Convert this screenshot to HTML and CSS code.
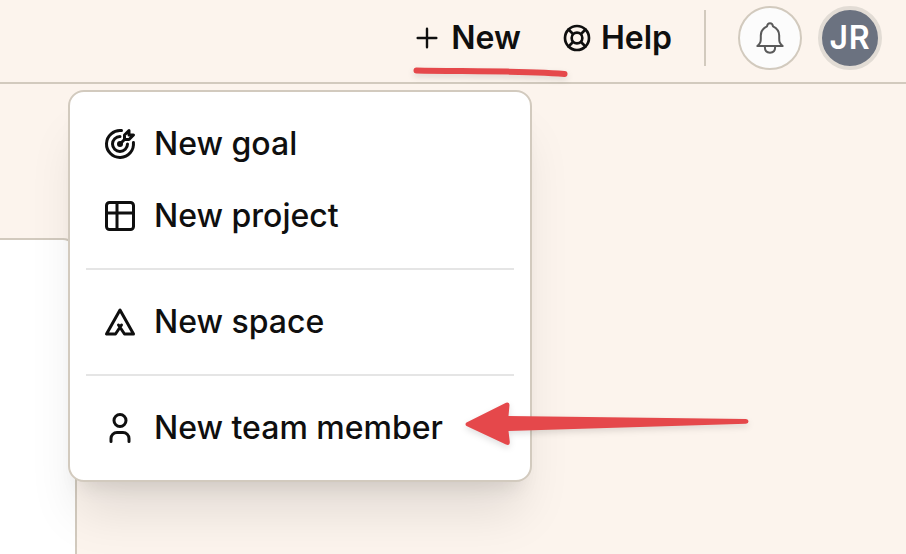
FILE: index.html
```html
<!DOCTYPE html>
<html lang="en">
<head>
<meta charset="utf-8">
<title>New menu</title>
<link rel="stylesheet" href="styles.css">
</head>
<body>
<header class="topbar">
  <div class="action action-new">
    <svg class="icon-sm icon-plus" viewBox="0 0 24 24"><path d="M12 5v14M5 12h14"/></svg>
    <span>New</span>
  </div>
  <div class="action action-help">
    <svg class="icon-sm" viewBox="0 0 24 24"><circle cx="12" cy="12" r="4"/><circle cx="12" cy="12" r="9"/><path d="M15 15l3.35 3.35M9 15l-3.35 3.35M5.65 5.65L9 9M18.35 5.65L15 9"/></svg>
    <span>Help</span>
  </div>
  <div class="divider"></div>
  <div class="bell">
    <svg viewBox="0 0 32 32"><path d="M3.300 24.100h25.400M3.500 24C6.500 21 6.800 20 6.800 16.500V13.500C6.800 9.500 9 6.200 13 4.300C13.300 2.500 14.200 1.300 16 1.300S18.700 2.500 19 4.300C23 6.200 25.200 9.500 25.200 13.500V16.500C25.200 20 25.500 21 28.500 24M10.800 24.500C10.800 28.200 12.800 30.700 16 30.700S21.200 28.200 21.200 24.500"/></svg>
  </div>
  <div class="avatar">JR</div>
</header>
<main class="page">
  <section class="sheet"></section>
</main>
<nav class="menu">
  <div class="item">
    <svg class="icon" viewBox="0 0 24 24"><circle cx="12" cy="12" r="1"/><path d="M12 7a5 5 0 1 0 5 5"/><path d="M13 3.055a9 9 0 1 0 7.941 7.945"/><path d="M15 6v3h3l3-3h-3v-3z"/><path d="M15 9l-3 3"/></svg>
    <span>New goal</span>
  </div>
  <div class="item">
    <svg class="icon" viewBox="0 0 24 24"><rect x="3" y="3" width="18" height="18" rx="2"/><path d="M3 10h18M10 3v18"/></svg>
    <span>New project</span>
  </div>
  <hr class="rule">
  <div class="item">
    <svg class="icon" viewBox="0 0 24 24"><path d="M11 14l4 6h6l-9-16l-9 16h6l4-6"/></svg>
    <span>New space</span>
  </div>
  <hr class="rule">
  <div class="item">
    <svg class="icon" viewBox="0 0 24 24"><circle cx="12" cy="7" r="4"/><path d="M6 21v-2a4 4 0 0 1 4-4h4a4 4 0 0 1 4 4v2"/></svg>
    <span>New team member</span>
  </div>
</nav>
<svg class="marks" viewBox="0 0 906 554">
  <path class="stroke" d="M416.500 70.500C460 71.500 520 70.500 564.500 74"/>
  <path class="arrow" d="M466.500 422.500L506 402.800Q509.500 401.500 509.500 405L508.500 416L746 419Q748.500 419.200 748.500 421.300Q748.500 423.500 746 423.700L508.500 431L509.800 442Q509.800 446 506 444.500L466.500 426Q464.500 424.200 466.500 422.500Z"/>
</svg>
</body>
</html>
```
FILE: styles.css
```css
* { box-sizing: border-box; }
body {
  margin: 0;
  width: 906px;
  height: 554px;
  overflow: hidden;
  position: relative;
  background: #fcf4ed;
  color: #0f0f0f;
  font-family: Inter, sans-serif;
  font-size: 32px;
}
svg {
  display: block;
  fill: none;
  stroke: currentColor;
  stroke-width: 2;
  stroke-linecap: round;
  stroke-linejoin: round;
}
.topbar {
  height: 84px;
  padding: 0 24px 6px 0;
  border-bottom: 2px solid #d2cabe;
  display: flex;
  align-items: center;
  justify-content: flex-end;
}
.action {
  display: flex;
  align-items: center;
  gap: 8px;
  font-weight: 600;
  line-height: 40px;
}
.action-new { margin-right: 40px; }
.action-help { margin-right: 32px; }
.icon-sm { width: 32px; height: 32px; }
.icon-plus { stroke-width: 1.8; }
.divider { width: 2px; height: 56px; background: #d2cabe; margin-right: 32px; }
.bell {
  width: 64px;
  height: 64px;
  margin-right: 16px;
  border: 2px solid #d2cabe;
  border-radius: 50%;
  background: #fcfcfc;
  color: #5a5a5a;
  display: grid;
  place-items: center;
}
.bell svg { width: 32px; height: 32px; }
.avatar {
  width: 64px;
  height: 64px;
  border: 4px solid #e2dcd5;
  border-radius: 50%;
  background: #6b7280;
  color: #fff;
  font-weight: 600;
  letter-spacing: .8px;
  line-height: 40px;
  display: grid;
  place-items: center;
}
.page { padding-top: 154px; }
.sheet {
  width: 77px;
  height: 330px;
  background: #fff;
  border: 2px solid #d2cabe;
  border-left: 0;
  border-bottom: 0;
  border-radius: 0 14px 0 0;
}
.menu {
  position: absolute;
  left: 68px;
  top: 90px;
  width: 464px;
  padding: 16px;
  background: #fff;
  border: 2px solid #d2cabe;
  border-radius: 16px;
  box-shadow: 0 40px 50px -10px rgba(0,0,0,.1), 0 16px 20px -12px rgba(0,0,0,.1);
  font-weight: 500;
}
.item {
  height: 72px;
  padding: 0 16px;
  display: flex;
  align-items: center;
  gap: 16px;
}
.item span { line-height: 40px; }
.icon { width: 36px; height: 36px; }
.rule { height: 2px; margin: 16px 0; border: 0; background: #e5e5e5; }
.marks {
  position: absolute;
  left: 0;
  top: 0;
  width: 906px;
  height: 554px;
  filter: drop-shadow(0 3px 3px rgba(0,0,0,.12));
}
.stroke { stroke: #e5484b; stroke-width: 6; }
.arrow { fill: #e5484b; stroke: none; }
```
